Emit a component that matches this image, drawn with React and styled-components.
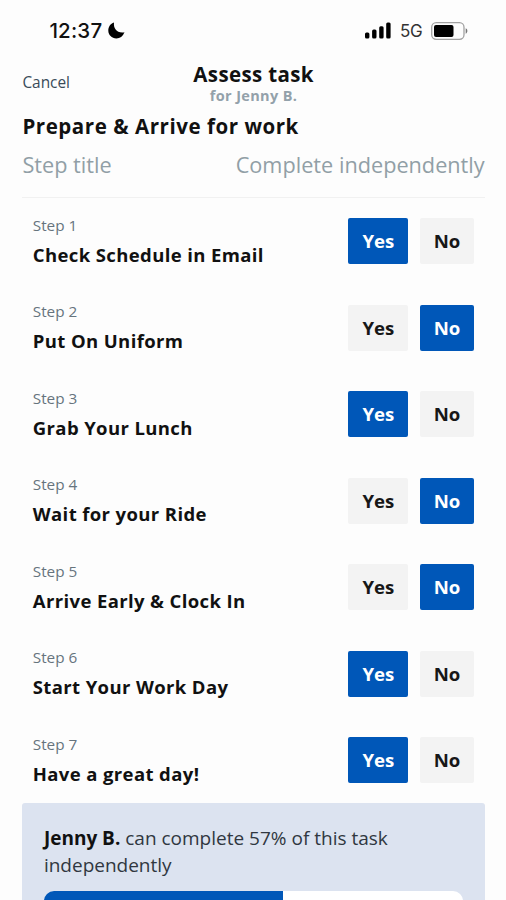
import React, { useState } from 'react'
import styled, { createGlobalStyle } from 'styled-components'

const GlobalStyle = createGlobalStyle`
* {
box-sizing: border-box;
}
body {
margin: 0;
background-color: #fdfdfd;
font-family: "Open Sans", "Noto Sans", sans-serif;
}
`
const Screen = styled.div`
height: 900px;
padding: 0 21.3px 0 22.4px;
overflow: hidden;
color: #111;
`
const StatusBar = styled.div`
display: flex;
justify-content: space-between;
align-items: center;
height: 61px;
padding: 0 17.2px 0 27px;
`
const StatusGroup = styled.div`
display: flex;
align-items: center;
font-family: Inter, sans-serif;
`
const Clock = styled.span`
font-size: 20.5px;
font-weight: 450;
line-height: 24px;
letter-spacing: 0.2px;
margin: 1px 6px 0 0;
`
const Network = styled.span`
color: #333;
font-size: 17px;
line-height: 20px;
letter-spacing: -0.2px;
margin: 1px 8px 0 9px;
`
const Header = styled.header`
display: grid;
grid-template-columns: 1fr auto 1fr;
height: 46px;
padding-top: 1px;
`
const Cancel = styled.button`
justify-self: start;
align-self: start;
margin-top: 10px;
padding: 0;
border: none;
background: none;
color: #394b59;
font-family: inherit;
font-size: 15.4px;
line-height: 21px;
cursor: pointer;
`
const HeaderTitle = styled.h1`
margin: 0;
font-size: 20.5px;
font-weight: 700;
line-height: 24px;
letter-spacing: 0.35px;
text-align: center;
`
const HeaderUser = styled.p`
margin: 1px 0 0;
color: #93a1aa;
font-size: 14.5px;
font-weight: 700;
line-height: 18px;
letter-spacing: 0.35px;
text-align: center;
`
const TaskName = styled.h2`
margin: 5px 0 0;
font-size: 20.5px;
font-weight: 700;
line-height: 28px;
letter-spacing: 0.55px;
white-space: nowrap;
`
const Columns = styled.div`
display: flex;
justify-content: space-between;
height: 58.2px;
padding-top: 11px;
border-bottom: 1px solid #f1f1f1;
color: #919fa6;
font-size: 21.7px;
line-height: 28px;
white-space: nowrap;
`
const Steps = styled.ul`
margin: 0;
padding: 0 10.4px;
list-style: none;
`
const Step = styled.li`
display: flex;
justify-content: space-between;
align-items: center;
height: 86.45px;
`
const StepText = styled.div`
padding-bottom: 1px;
`
const StepNumber = styled.div`
color: #66747d;
font-size: 15.3px;
line-height: 20px;
`
const StepTitle = styled.div`
margin-top: 8px;
font-size: 18.5px;
font-weight: 700;
line-height: 24px;
letter-spacing: 0.38px;
white-space: nowrap;
`
const Answers = styled.div`
display: flex;
gap: 11.5px;
`
const Answer = styled.button`
width: ${({ $width }) => $width};
height: 46px;
padding: 0;
border: none;
border-radius: 2px;
background-color: ${({ $active }) => ($active ? '#0057b8' : '#f3f3f3')};
color: ${({ $active }) => ($active ? 'white' : '#171717')};
font-family: inherit;
font-size: 18.6px;
font-weight: 700;
line-height: 24px;
cursor: pointer;
`
const Summary = styled.section`
height: 150px;
padding: 22px 21.5px 0;
border-radius: 3px;
background-color: #dce3f0;
`
const SummaryText = styled.p`
margin: 0;
color: #303740;
font-size: 19px;
line-height: 26.5px;
`
const Learner = styled.strong`
color: #111;
font-weight: 700;
`
const Bar = styled.div`
height: 32px;
margin-top: 13px;
border-radius: 10px;
background-color: white;
overflow: hidden;
`
const BarFill = styled.div`
height: 100%;
background-color: #0057b8;
`

const initialSteps = [
    { title: 'Check Schedule in Email', done: true },
    { title: 'Put On Uniform', done: false },
    { title: 'Grab Your Lunch', done: true },
    { title: 'Wait for your Ride', done: false },
    { title: 'Arrive Early & Clock In', done: false },
    { title: 'Start Your Work Day', done: true },
    { title: 'Have a great day!', done: true },
]

function MoonIcon() {
    return (
        <svg width="17" height="17" viewBox="0 0 17 17">
            <path d="M6 0.5C5.2 6.8 9.2 11.4 16.5 10.2C14.8 14.3 12 16.4 8.4 16.4C3.7 16.4 0.3 13.1 0.3 8.6C0.3 4.9 2.4 1.7 6 0.5Z" />
        </svg>
    )
}

function SignalIcon() {
    return (
        <svg width="26" height="17" viewBox="0 0 26 17">
            <rect x="0" y="10.5" width="4.4" height="6" rx="1.5" />
            <rect x="7.1" y="7.5" width="4.4" height="9" rx="1.5" />
            <rect x="14.2" y="4.2" width="4.4" height="12.3" rx="1.5" />
            <rect x="21.2" y="0.5" width="4.4" height="16" rx="1.5" />
        </svg>
    )
}

function BatteryIcon() {
    return (
        <svg width="37" height="18" viewBox="0 0 37 18">
            <rect x="0.7" y="0.7" width="32.3" height="16.6" rx="4.5" fill="none" stroke="#a2a2a2" strokeWidth="1.3" />
            <rect x="3" y="3" width="19.5" height="12" rx="2" />
            <path d="M34.7 6.3C36.9 7.2 36.9 10.8 34.7 11.7Z" fill="#777" />
        </svg>
    )
}

function App() {
    const [steps, setSteps] = useState(initialSteps)

    const answerStep = (index, done) => {
        setSteps(steps.map((step, i) => (i === index ? { ...step, done } : step)))
    }

    const percent = Math.round((steps.filter((step) => step.done).length / steps.length) * 100)

    return (
        <Screen>
            <GlobalStyle />
            <StatusBar>
                <StatusGroup>
                    <Clock>12:37</Clock>
                    <MoonIcon />
                </StatusGroup>
                <StatusGroup>
                    <SignalIcon />
                    <Network>5G</Network>
                    <BatteryIcon />
                </StatusGroup>
            </StatusBar>

            <Header>
                <Cancel>Cancel</Cancel>
                <div>
                    <HeaderTitle>Assess task</HeaderTitle>
                    <HeaderUser>for Jenny B.</HeaderUser>
                </div>
            </Header>

            <TaskName>Prepare & Arrive for work</TaskName>
            <Columns>
                <span>Step title</span>
                <span>Complete independently</span>
            </Columns>

            <Steps>
                {steps.map((step, index) => (
                    <Step key={step.title}>
                        <StepText>
                            <StepNumber>Step {index + 1}</StepNumber>
                            <StepTitle>{step.title}</StepTitle>
                        </StepText>
                        <Answers>
                            <Answer $width="60px" $active={step.done} onClick={() => answerStep(index, true)}>Yes</Answer>
                            <Answer $width="54.5px" $active={!step.done} onClick={() => answerStep(index, false)}>No</Answer>
                        </Answers>
                    </Step>
                ))}
            </Steps>

            <Summary>
                <SummaryText>
                    <Learner>Jenny B.</Learner> can complete {percent}% of this task independently
                </SummaryText>
                <Bar>
                    <BarFill style={{ width: `${percent}%` }} />
                </Bar>
            </Summary>
        </Screen>
    )
}

export default App
